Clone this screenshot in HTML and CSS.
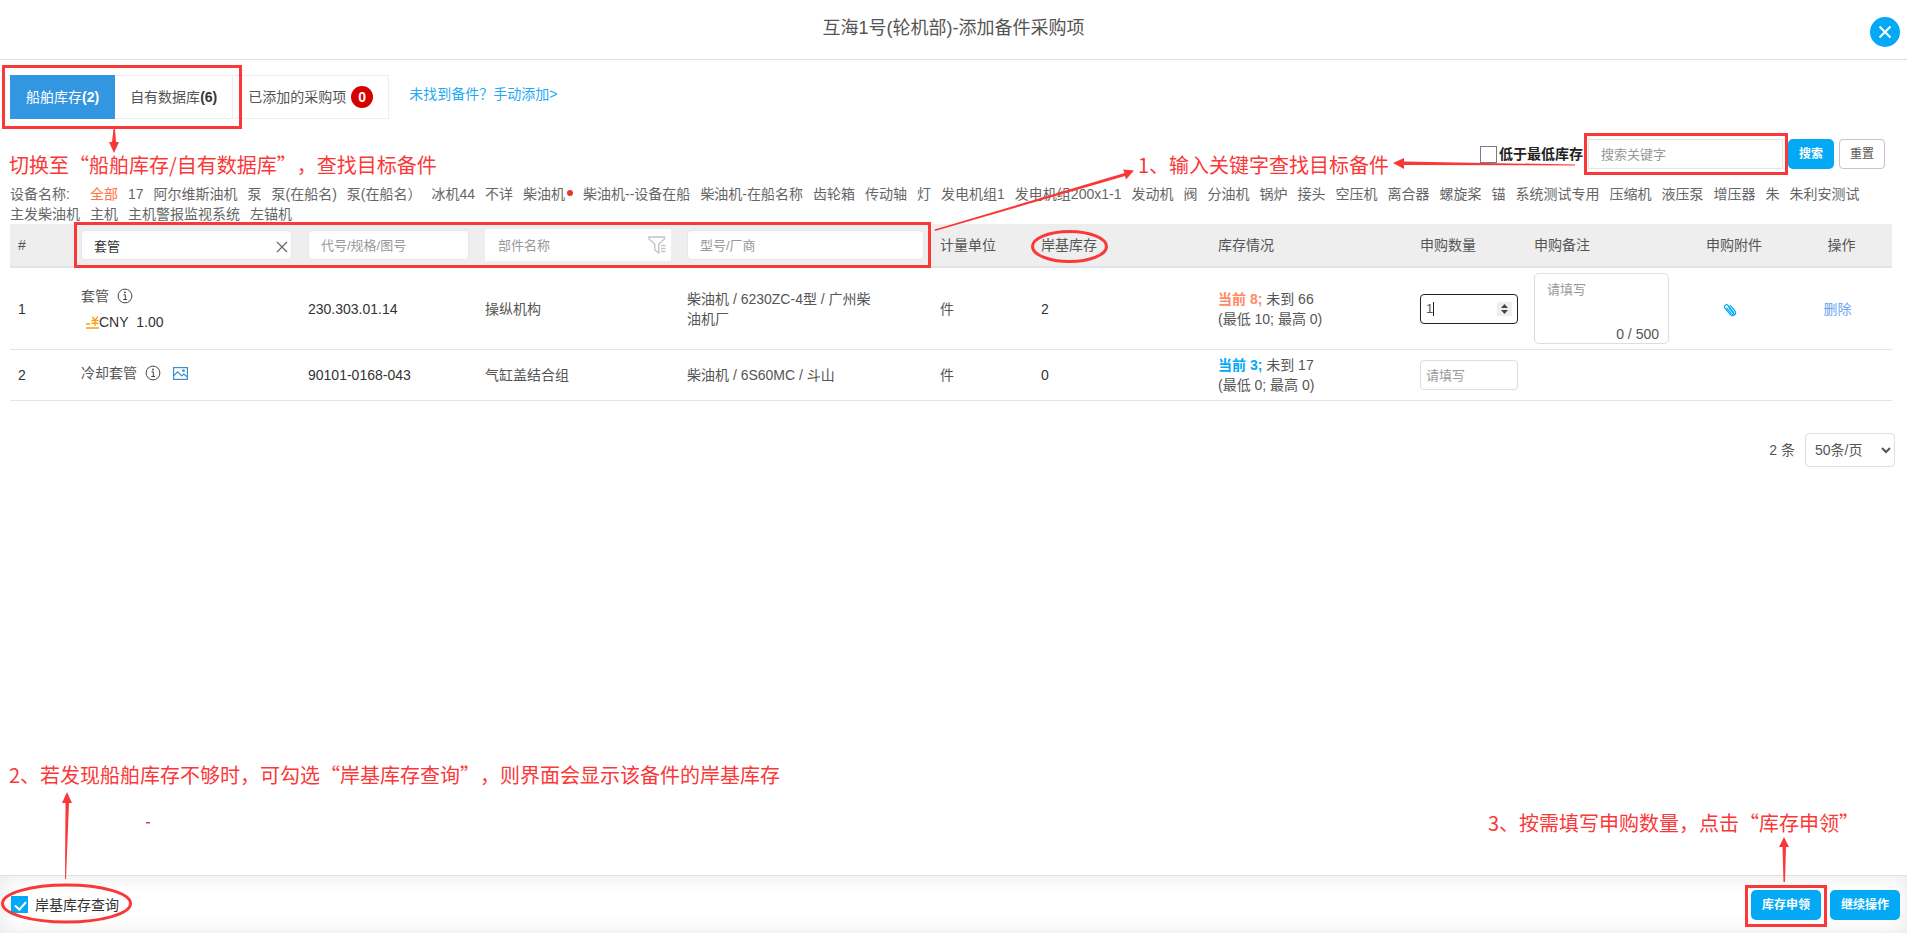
FILE: index.html
```html
<!DOCTYPE html>
<html lang="zh-CN">
<head>
<meta charset="utf-8">
<title>添加备件采购项</title>
<link rel="stylesheet" href="styles.css">
</head>
<body>
<svg class="defs" aria-hidden="true">
  <symbol id="info" viewBox="0 0 16 16"><circle cx="8" cy="8" r="6.9" fill="none" stroke="#444"/><path d="M6.5 6.8h1.8v4.6M6.3 11.5h3.8" fill="none" stroke="#444"/><circle cx="8" cy="4.5" r=".9" fill="#444"/></symbol>
</svg>
<header class="head">
  <h1 class="head-title">互海1号(轮机部)-添加备件采购项</h1>
  <button class="close" aria-label="关闭"><svg width="14" height="14" viewBox="0 0 14 14"><path d="M1.5 1.5l11 11M12.500 1.500l-11 11" stroke="#fff" stroke-width="2"/></svg></button>
</header>

<main class="main">
  <nav class="tabs">
    <button class="tab tab-on">船舶库存<b>(2)</b></button>
    <button class="tab">自有数据库<b>(6)</b></button>
    <button class="tab tab-added">已添加的采购项<span class="count">0</span></button>
    <a class="manual" href="#">未找到备件？手动添加&gt;</a>
  </nav>

  <form class="search">
    <label class="low"><input class="low-box" type="checkbox">低于最低库存</label>
    <input class="search-box" type="text" placeholder="搜索关键字" aria-label="搜索关键字">
    <button class="btn search-btn" type="button">搜索</button>
    <button class="btn-reset" type="button">重置</button>
  </form>

  <div class="filters">
    <span class="filters-label">设备名称:</span>
    <a class="filter filter-on">全部</a><a class="filter">17</a><a class="filter">阿尔维斯油机</a><a class="filter">泵</a><a class="filter">泵(在船名)</a><a class="filter">泵(在船名）</a><a class="filter">冰机44</a><a class="filter">不详</a><a class="filter">柴油机<i class="dot"></i></a><a class="filter">柴油机--设备在船</a><a class="filter">柴油机-在船名称</a><a class="filter">齿轮箱</a><a class="filter">传动轴</a><a class="filter">灯</a><a class="filter">发电机组1</a><a class="filter">发电机组200x1-1</a><a class="filter">发动机</a><a class="filter">阀</a><a class="filter">分油机</a><a class="filter">锅炉</a><a class="filter">接头</a><a class="filter">空压机</a><a class="filter">离合器</a><a class="filter">螺旋桨</a><a class="filter">锚</a><a class="filter">系统测试专用</a><a class="filter">压缩机</a><a class="filter">液压泵</a><a class="filter">增压器</a><a class="filter">朱</a><a class="filter">朱利安测试</a><a class="filter">主发柴油机</a><a class="filter">主机</a><a class="filter">主机警报监视系统</a><a class="filter">左锚机</a>
  </div>

  <table class="parts">
    <colgroup><col class="c1"><col class="c2"><col class="c3"><col class="c4"><col class="c5"><col class="c6"><col class="c7"><col class="c8"><col class="c9"><col class="c10"><col class="c11"><col class="c12"></colgroup>
    <thead>
      <tr>
        <th>#</th>
        <th><div class="field"><input class="th-input th-name" type="text" value="套管" aria-label="备件名称"><svg class="field-x" width="12" height="12" viewBox="0 0 12 12"><path d="M1 1l10 10M11 1L1 11" stroke="#666" stroke-width="1.200"/></svg></div></th>
        <th><input class="th-input" type="text" placeholder="代号/规格/图号" aria-label="代号/规格/图号"></th>
        <th><div class="field"><input class="th-input th-flat" type="text" placeholder="部件名称" aria-label="部件名称"><svg class="field-funnel" width="18" height="18" viewBox="0 0 18 18" fill="none" stroke="#c4c4c4" stroke-width="1.400"><path d="M1 1h15.500v2L10.800 8v9L6.700 14V8L1 3z"/><path d="M13 9.500h4.500M13 12.500h4.500M13 15.500h4.500"/></svg></div></th>
        <th><input class="th-input" type="text" placeholder="型号/厂商" aria-label="型号/厂商"></th>
        <th>计量单位</th><th>岸基库存</th><th>库存情况</th><th>申购数量</th><th>申购备注</th>
        <th class="mid">申购附件</th><th class="mid">操作</th>
      </tr>
    </thead>
    <tbody>
      <tr class="row-open">
        <td class="num">1</td>
        <td><div class="name">套管<svg class="ic" width="16" height="16"><use href="#info"/></svg></div>
          <div class="price"><svg width="13" height="14" viewBox="0 0 13 14" fill="none" stroke="#f9a11b" stroke-width="1.400"><path d="M0 9h4M5.500 5.500h7M5.500 8.300h7M9 5v6M6.300 1.800l2.700 3.400 2.700-3.400M0 13h13"/></svg>CNY&nbsp; 1.00</div></td>
        <td class="num">230.303.01.14</td><td>操纵机构</td>
        <td><div class="model">柴油机 / 6230ZC-4型 / 广州柴油机厂</div></td>
        <td>件</td><td class="num">2</td>
        <td><b class="low-stock">当前 8;</b> 未到 66<br>(最低 10; 最高 0)</td>
        <td><div class="field"><input class="qty qty-on" type="number" value="1" aria-label="申购数量"><i class="caret"></i><svg class="spin" width="15" height="14" viewBox="0 0 15 14"><path d="M0 0h15v14H0z" fill="#efefef"/><path d="M4 6l3.500-4L11 6zM4 8l3.500 4L11 8z" fill="#444"/></svg></div></td>
        <td><div class="field"><textarea class="note" placeholder="请填写" aria-label="申购备注"></textarea><span class="note-count">0 / 500</span></div></td>
        <td class="mid"><a href="#" aria-label="附件"><svg class="clip" width="14" height="14" viewBox="0 0 14 14" fill="none" stroke="#03a9f4" stroke-width="1.200" stroke-linecap="round"><path d="M3.800 5.200l4.900 5.700c1.200 1.200 2.800-.1 1.800-1.500L5.200 2.600C3.400.4.300 2.800 1.900 5.100l5.400 6.500c2.300 2.700 6.800-.3 4.700-3.500L7.300 2.300M5.800 4.400l3.900 4.900"/></svg></a></td>
        <td class="mid"><a class="del" href="#">删除</a></td>
      </tr>
      <tr class="row">
        <td class="num">2</td>
        <td><div class="name name-high">冷却套管<svg class="ic" width="16" height="16"><use href="#info"/></svg><svg class="ic pic" width="15" height="13" viewBox="0 0 15 13" fill="none" stroke="#3b8fd0" stroke-width="1.200"><rect x=".6" y=".6" width="13.800" height="11.800"/><path d="M1 8.500l3.700-3.700 4 4.200 2-2 3.600 3"/><circle cx="10.500" cy="3.700" r=".8"/></svg></div></td>
        <td class="num">90101-0168-043</td><td>气缸盖结合组</td>
        <td><div class="model">柴油机 / 6S60MC / 斗山</div></td>
        <td>件</td><td class="num">0</td>
        <td><b class="ok-stock">当前 3;</b> 未到 17<br>(最低 0; 最高 0)</td>
        <td><input class="qty" type="number" placeholder="请填写" aria-label="申购数量"></td>
        <td></td><td></td><td></td>
      </tr>
    </tbody>
  </table>

  <div class="pager"><span>2 条</span><select class="pager-size" aria-label="每页条数"><option>50条/页</option></select></div>
</main>

<footer class="foot">
  <label class="shore"><input class="shore-box" type="checkbox" checked>岸基库存查询</label>
  <div class="foot-btns"><button class="btn foot-btn">库存申领</button><button class="btn foot-btn">继续操作</button></div>
</footer>

<div class="marks">
  <svg class="mark-top" width="1240" height="280" viewBox="0 0 1240 280" fill="none" stroke="#fb3838" stroke-width="3">
    <rect x="3.500" y="66.500" width="237" height="61"/>
    <rect x="75.500" y="223.500" width="854" height="43"/>
    <ellipse cx="1069.500" cy="246.500" rx="37" ry="15"/>
    <path d="M113.500 129h1.500l1 13h3l-5 11-5-11h3zM934.500 229.500L1124.500 173l-1.500-3.500 11 1-8 9-1-3.500-190 55z" fill="#fb3838" stroke="none"/>
  </svg>
  <svg class="mark-search" width="400" height="50" viewBox="0 0 400 50" fill="none" stroke="#fb3838" stroke-width="3">
    <rect x="78.500" y="4.500" width="201" height="39"/>
  </svg>
  <svg class="mark-arrow" width="184" height="14" viewBox="0 0 184 14"><path d="M0 7l11-5v3.500l171 3v1L11 9v4z" fill="#fb3838"/></svg>
  <svg class="mark-shore" width="160" height="150" viewBox="0 0 160 150" fill="none" stroke="#fb3838" stroke-width="3">
    <ellipse cx="66.500" cy="120.500" rx="64" ry="18.500"/>
    <path d="M65 96l0.500-76h-3.500l5-11 5 11h-3l-3 76zM146 39h4v1.500h-4z" fill="#fb3838" stroke="none"/>
  </svg>
  <svg class="mark-apply" width="90" height="100" viewBox="0 0 90 100" fill="none" stroke="#fb3838" stroke-width="3">
    <rect x="4.500" y="53.500" width="79" height="39"/>
    <path d="M41.500 49l-1-35H37l5-10 5 10h-3l-1 35z" fill="#fb3838" stroke="none"/>
  </svg>
  <p class="tip tip-tabs">切换至“船舶库存/自有数据库”，查找目标备件</p>
  <p class="tip tip-search">1、输入关键字查找目标备件</p>
  <p class="tip tip-shore">2、若发现船舶库存不够时，可勾选“岸基库存查询”，则界面会显示该备件的岸基库存</p>
  <p class="tip tip-apply">3、按需填写申购数量，点击“库存申领”</p>
</div>
</body>
</html>
```

FILE: styles.css
```css
* { box-sizing: border-box; }
body {
  margin: 0;
  min-height: 100vh;
  display: flex;
  flex-direction: column;
  position: relative;
  background: #fff;
  color: #555;
  font: 14px/20px "Liberation Sans", "Noto Sans CJK SC", sans-serif;
}
input, button, select, textarea { font: inherit; color: inherit; margin: 0; }
button { cursor: pointer; border: 0; padding: 0; }
a { text-decoration: none; color: inherit; }
.defs { position: absolute; width: 0; height: 0; }

.head { height: 60px; border-bottom: 1px solid #ddd; display: flex; justify-content: center; position: relative; }
.head-title { margin: 0; padding-top: 15px; font-size: 18px; line-height: 26px; font-weight: 400; }
.close { position: absolute; right: 7px; top: 17px; width: 30px; height: 30px; border-radius: 50%; background: #03a9f4; display: grid; place-items: center; }

.main { flex: 1; padding: 15px 15px 0 10px; }
.tabs { display: flex; height: 44px; }
.tab { background: #fff; border: 1px solid #eee; border-left: 0; padding: 0 15px; }
.tab b { color: #333; }
.tab-on, .tab-on b { color: #fff; }
.tab-on { background: #3296e1; border: 0; padding: 0 16px; }
.tab-added { display: flex; align-items: center; gap: 5px; }
.count { width: 22px; height: 22px; border-radius: 50%; background: #d60000; color: #fff; font-weight: 700; line-height: 22px; }
.manual { margin-left: 20px; line-height: 38px; color: #1fa9f2; }

.search { display: flex; justify-content: flex-end; align-items: center; height: 30px; margin: 20px 7px 15px 0; font-size: 13px; }
.low { display: flex; align-items: center; gap: 2px; margin-right: 5px; font-size: 14px; font-weight: 700; color: #222; }
.low-box { appearance: none; width: 17px; height: 17px; border: 1px solid #6f7f90; background: #fff; }
.search-box { width: 195px; height: 30px; border: 1px solid #e4e4e4; padding: 0 12px; margin-right: 5px; }
::placeholder { color: #999; opacity: 1; }
.btn { background: #03a9f4; color: #fff; border-radius: 5px; height: 30px; font-size: 12px; font-weight: 700; }
.search-btn { width: 46px; margin-right: 5px; }
.btn-reset { width: 46px; height: 30px; border: 1px solid #c4c4c8; border-radius: 4px; background: #fff; font-size: 12px; }

.filters { color: #666; display: flex; flex-wrap: wrap; }
.filters-label { margin-right: 20px; }
.filter { margin-right: 10px; white-space: nowrap; }
.filter-on { color: #ff7043; }
.dot { display: inline-block; width: 6px; height: 6px; margin: 0 0 4px 2px; border-radius: 50%; background: #e8382c; vertical-align: middle; }

.parts { width: 100%; table-layout: fixed; border-collapse: separate; border-spacing: 0; }
.c1 { width: 63px; } .c2 { width: 227px; } .c3 { width: 177px; } .c4 { width: 202px; }
.c5 { width: 253px; } .c6 { width: 101px; } .c7 { width: 177px; } .c8 { width: 202px; }
.c9 { width: 114px; } .c10 { width: 151px; } .c11 { width: 114px; } .c12 { width: 101px; }
.parts th { height: 44px; padding: 0 8px; background: #eee; border-bottom: 2px solid #e1e5ea; font-weight: 400; text-align: left; }
.parts td { padding: 0 8px; border-bottom: 1px solid #e4e4e4; }
.parts .num { color: #333; }
.parts .mid { text-align: center; }
.parts td.mid { padding-right: 16px; }
.row-open { height: 82px; }
.row { height: 51px; }
.th-input { display: block; width: 100%; height: 30px; border: 1px solid #e6e6e6; border-radius: 4px; background: #fff; padding: 0 12px; font-size: 13px; }
.th-name { color: #333; }
.th-flat { height: 32px; border-color: #fff; border-radius: 1px; }
.field { position: relative; }
.field-x { position: absolute; right: 4px; top: 11px; }
.field-funnel { position: absolute; right: 5px; top: 7px; }
.name { display: flex; align-items: center; line-height: 20px; }
.name-high { padding-bottom: 4px; }
.ic { margin-left: 8px; }
.pic { margin-left: 12px; }
.price { display: flex; align-items: center; padding: 6px 0 0 5px; color: #333; }
.model { max-width: 190px; }
.low-stock { color: #ff8a65; }
.ok-stock { color: #03a9f4; }
.qty { display: block; width: 98px; height: 30px; border: 1px solid #ddd; border-radius: 4px; padding: 0 5px; font-size: 13px; }
.qty-on { border-color: #222; }
.qty::-webkit-inner-spin-button { display: none; }
.spin { position: absolute; left: 77px; top: 8px; }
.caret { position: absolute; left: 13px; top: 8px; width: 1px; height: 14px; background: #222; }
.note { display: block; width: 100%; height: 71px; border: 1px solid #ddd; border-radius: 5px; padding: 6px 12px; resize: none; font-size: 13px; }
.note-count { position: absolute; right: 10px; bottom: 0; }
.clip { vertical-align: middle; }
.del { color: #6aa5ee; }

.pager { display: flex; justify-content: flex-end; align-items: center; gap: 10px; margin: 32px -3px 0 0; }
.pager-size { width: 90px; height: 34px; border: 1px solid #ddd; border-radius: 4px; background: #fff; padding: 0 5px; }

.foot { height: 58px; border-top: 1px solid #e0e0e0; box-shadow: inset 0 0 20px #e8e8e8; padding: 0 7px 0 11px; display: flex; justify-content: space-between; align-items: center; }
.shore { display: flex; align-items: center; gap: 7px; color: #333; }
.shore-box { width: 17px; height: 17px; appearance: none; background: #03a9f4; position: relative; }
.shore-box::after { content: ""; position: absolute; left: 6px; top: 3px; width: 5px; height: 9px; border: solid #fff; border-width: 0 2px 2px 0; transform: rotate(42deg); }
.foot-btns { display: flex; gap: 9px; }
.foot-btn { width: 70px; }

/* callouts drawn over the page */
.marks { position: absolute; inset: 0; pointer-events: none; overflow: hidden; }
.marks > * { position: absolute; }
.mark-top { left: 0; top: 0; }
.mark-search { right: 0; top: 130px; }
.mark-arrow { right: 330px; top: 156px; }
.mark-shore { left: 0; bottom: 0; }
.mark-apply { right: 75px; bottom: 0; }
.tip { margin: 0; font: 20px/30px "Noto Sans CJK SC", sans-serif; color: #fb3838; white-space: nowrap; text-spacing-trim: space-all; }
.tip-tabs { left: 9px; top: 150px; }
.tip-search { right: 518px; top: 150px; }
.tip-shore { left: 9px; bottom: 143px; }
.tip-apply { right: 48px; bottom: 95px; }
```
